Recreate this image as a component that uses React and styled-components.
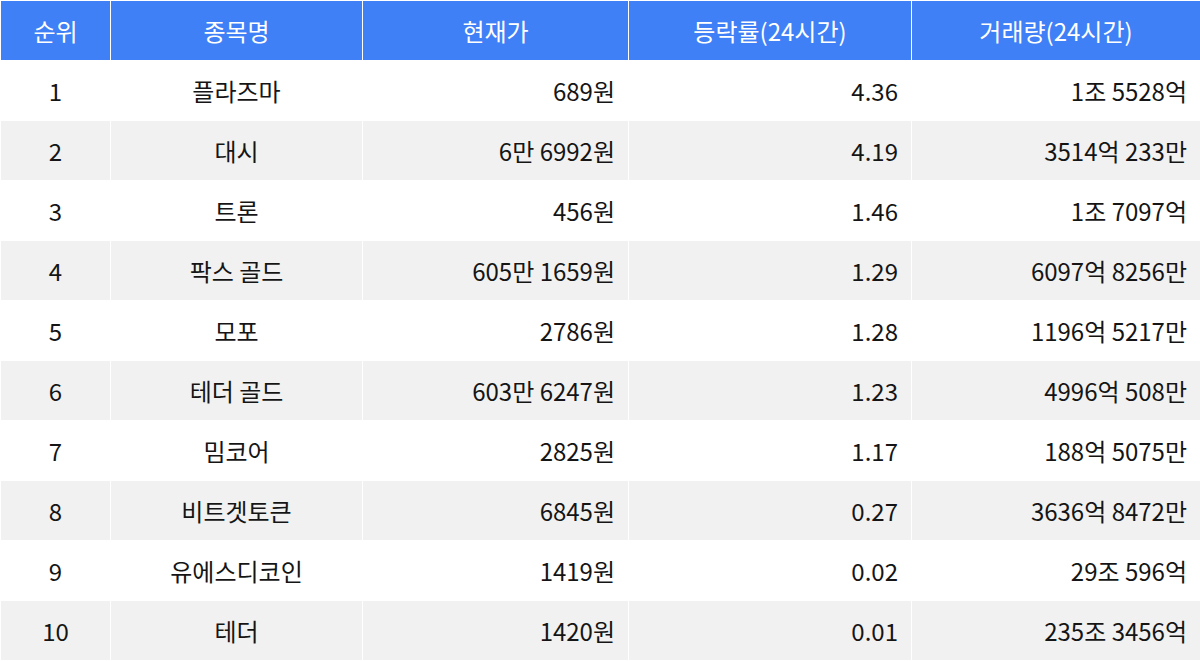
import styled, { createGlobalStyle } from 'styled-components';

const GlobalStyle = createGlobalStyle`
  html, body {
    margin: 0;
    padding: 0;
    background: #ffffff;
  }
  body {
    font-family: "Noto Sans CJK KR", "Noto Sans", sans-serif;
    color: #151515;
  }
`;

const Table = styled.table`
  width: 1200px;
  border-collapse: collapse;
  table-layout: fixed;
`;

const HeadCell = styled.th`
  height: 59px;
  padding: 0;
  background-color: #4080f6;
  color: #ffffff;
  font-size: 24px;
  font-weight: 400;
  text-align: center;
  border: 1px solid #ffffff;
`;

const Row = styled.tr`
  background-color: ${(p) => (p.$odd ? '#f1f1f1' : '#ffffff')};
`;

const Cell = styled.td`
  height: 59px;
  padding: ${(p) => (p.$align === 'right' ? '0 13px 0 0' : '0')};
  font-size: 24px;
  text-align: ${(p) => p.$align || 'center'};
  border: 1px solid #ffffff;
`;

const columns = [
  { label: '순위', width: 110 },
  { label: '종목명', width: 252 },
  { label: '현재가', width: 266 },
  { label: '등락률(24시간)', width: 283 },
  { label: '거래량(24시간)', width: 289 },
];

const rows = [
  [1, '플라즈마', '689원', '4.36', '1조 5528억'],
  [2, '대시', '6만 6992원', '4.19', '3514억 233만'],
  [3, '트론', '456원', '1.46', '1조 7097억'],
  [4, '팍스 골드', '605만 1659원', '1.29', '6097억 8256만'],
  [5, '모포', '2786원', '1.28', '1196억 5217만'],
  [6, '테더 골드', '603만 6247원', '1.23', '4996억 508만'],
  [7, '밈코어', '2825원', '1.17', '188억 5075만'],
  [8, '비트겟토큰', '6845원', '0.27', '3636억 8472만'],
  [9, '유에스디코인', '1419원', '0.02', '29조 596억'],
  [10, '테더', '1420원', '0.01', '235조 3456억'],
];

export default function App() {
  return (
    <>
      <GlobalStyle />
      <Table>
        <colgroup>
          {columns.map((c) => (
            <col key={c.label} style={{ width: c.width }} />
          ))}
        </colgroup>
        <thead>
          <tr>
            {columns.map((c) => (
              <HeadCell key={c.label}>{c.label}</HeadCell>
            ))}
          </tr>
        </thead>
        <tbody>
          {rows.map((r, i) => (
            <Row key={r[0]} $odd={i % 2 === 1}>
              <Cell $align="center">{r[0]}</Cell>
              <Cell $align="center">{r[1]}</Cell>
              <Cell $align="right">{r[2]}</Cell>
              <Cell $align="right">{r[3]}</Cell>
              <Cell $align="right">{r[4]}</Cell>
            </Row>
          ))}
        </tbody>
      </Table>
    </>
  );
}
